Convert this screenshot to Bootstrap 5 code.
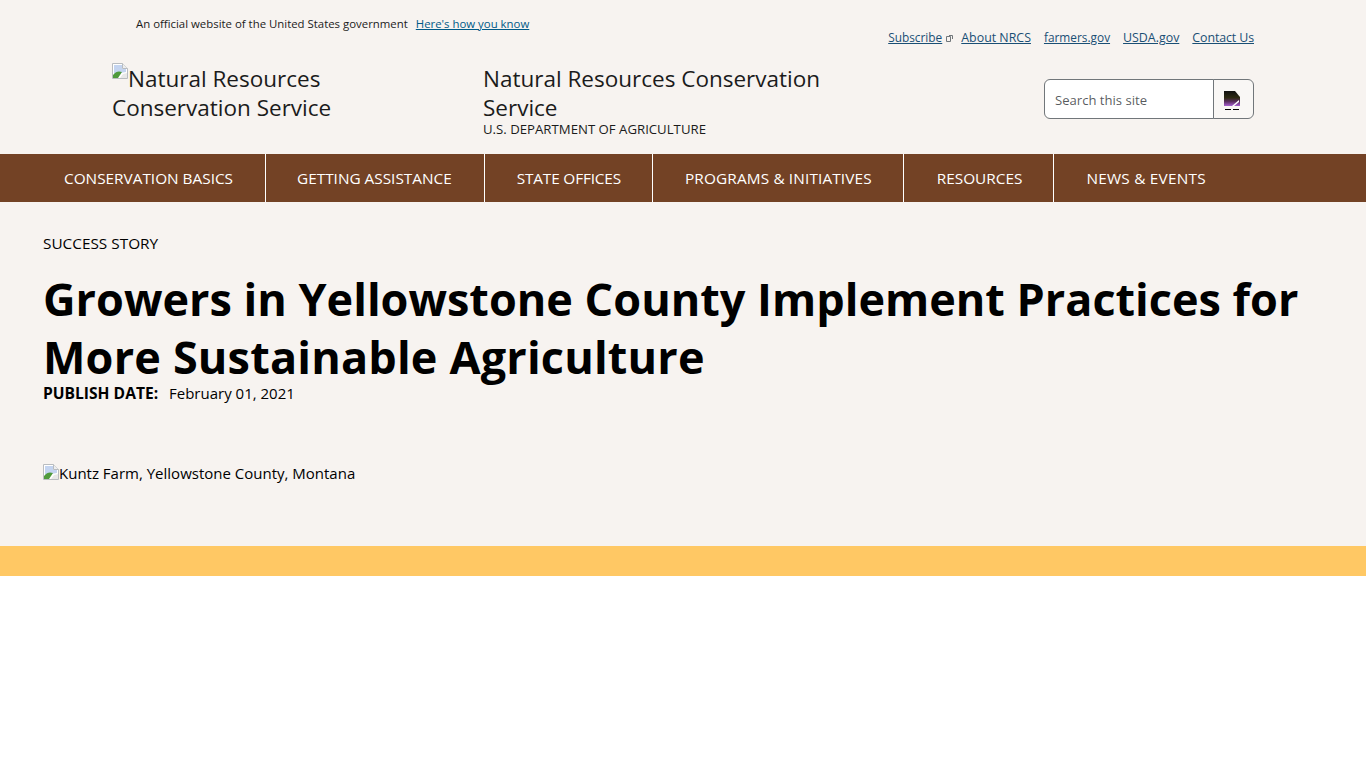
<!DOCTYPE html>
<html lang="en">
<head>
    <meta charset="UTF-8">
    <meta name="viewport" content="width=device-width, initial-scale=1.0">
    <title>Growers in Yellowstone County Implement Practices for More Sustainable Agriculture</title>

    <!-- Bootstrap CSS -->
    <link href="https://cdn.jsdelivr.net/npm/bootstrap@5.3.0/dist/css/bootstrap.min.css" rel="stylesheet">

    <!-- Custom CSS -->
    <style>
        body {
            background-color: #fff;
            font-family: "Open Sans", "Noto Sans", sans-serif;
            font-size: 15px;
            color: #000;
        }
        .page-tint {
            background-color: #f7f3f0;
        }
        .gov-banner {
            height: 48px;
            padding-left: 136px;
            padding-right: 112px;
        }
        .gov-text {
            font-size: 11.4px;
            padding-top: 15px;
            color: #1b1b1b;
        }
        .gov-link {
            color: #005a87;
            margin-left: 8px;
        }
        .top-links {
            padding-top: 29px;
            font-size: 12.4px;
            gap: 13px;
        }
        .top-links a {
            color: #1a4f75;
        }
        .top-links a:last-child {
            letter-spacing: -.1px;
        }
        .top-links .narrow-link {
            font-size: 11.85px;
        }
        .subscribe-item {
            margin-right: -5px;
        }
        .ext-mark {
            width: 7px;
            height: 7px;
            margin-left: 4px;
        }
        .brand-row {
            height: 106px;
            padding-left: 112px;
            padding-right: 112px;
        }
        .logo-alt {
            width: 371px;
            padding-top: 15px;
            font-size: 22.5px;
            line-height: 29px;
            color: #1b1b1b;
        }
        .site-name {
            width: 370px;
            padding-top: 16px;
            font-size: 22.5px;
            line-height: 29px;
            color: #1b1b1b;
        }
        .dept-name {
            font-size: 13.2px;
            line-height: 14px;
        }
        .search-wrap {
            width: 210px;
            height: 40px;
            margin-top: 31px;
        }
        .search-wrap .form-control {
            background-color: #fff;
            border-color: #71767a;
            font-size: 13.1px;
            height: 40px;
            padding-left: 10px;
            padding-top: 8px;
        }
        .search-wrap .btn {
            width: 41px;
            padding: 0 3px 0 0;
            background-color: #f9f7f5;
            border-color: #71767a;
        }
        .main-nav {
            background-color: #734225;
            height: 48px;
            padding-left: 32px;
        }
        .main-nav a {
            color: #fff;
            font-size: 15.35px;
            line-height: 48px;
            padding: 0 31px 0 32px;
            text-decoration: none;
            border-right: 1px solid #fff;
        }
        .main-nav a:last-child {
            border-right: 0;
        }
        .main-nav a:nth-child(1) {
            padding-right: 32px;
        }
        .main-nav a:nth-child(2) {
            padding: 0 32px 0 31px;
        }
        .main-nav a:nth-child(3) {
            letter-spacing: -.15px;
        }
        .main-nav a:nth-child(4) {
            letter-spacing: .14px;
        }
        .main-nav a:nth-child(5) {
            padding-left: 33px;
        }
        .main-nav a:nth-child(6) {
            letter-spacing: .23px;
        }
        .story {
            height: 344px;
            padding: 31px 43px 0;
        }
        .story-kicker {
            font-size: 15.35px;
            line-height: 21px;
        }
        .story-title {
            font-size: 45px;
            font-weight: 700;
            line-height: 57.6px;
            margin: 16px 0 0;
        }
        .title-tail {
            letter-spacing: .18px;
        }
        .publish-row {
            line-height: 21px;
            margin-top: -2px;
        }
        .publish-row strong {
            font-size: 15.6px;
            margin-right: 7px;
        }
        .photo-alt {
            margin-top: 59px;
            line-height: 21px;
        }
        .broken-pic {
            vertical-align: -1px;
        }
        .logo-alt .broken-pic {
            vertical-align: 8px;
        }
        .footer-strip {
            background-color: #ffc864;
            height: 30px;
        }
    </style>
</head>
<body>

<svg width="0" height="0" class="d-block">
    <symbol id="brokenImage" viewBox="0 0 16 16">
        <path d="M.5.5h10l5 5v10H.5z" fill="#fff" stroke="#b9bcc0"/>
        <path d="M10.5.5v5h5" fill="#eee" stroke="#b9bcc0"/>
        <path d="M2 2h8v4h4v3L2 11z" fill="#c4d4f0"/>
        <path d="M1 15v-3c3-4 6-4 9-3l-4 6z" fill="#4f9a3c"/>
        <path d="M8 15l3-4 4-1v5z" fill="#e8e8e8"/>
    </symbol>
</svg>

<div class="page-tint">
    <!-- Gov banner + utility links -->
    <div class="gov-banner d-flex justify-content-between">
        <div class="d-flex align-items-start">
            <span class="gov-text">An official website of the United States government</span>
            <a class="gov-link gov-text" href="#">Here's how you know</a>
        </div>
        <div class="top-links d-flex align-items-start">
            <span class="subscribe-item">
                <a class="narrow-link" href="#">Subscribe</a><svg class="ext-mark" viewBox="0 0 7 7"><path d="M.5 1.500h4v5h-4z M3 .5h3.500V4" fill="none" stroke="#71767a" stroke-width="1"/></svg>
            </span>
            <a href="#">About NRCS</a>
            <a class="narrow-link" href="#">farmers.gov</a>
            <a href="#">USDA.gov</a>
            <a href="#">Contact Us</a>
        </div>
    </div>

    <!-- Logo, site name, search -->
    <div class="brand-row d-flex">
        <div class="logo-alt">
            <svg class="broken-pic" width="16" height="16"><use href="#brokenImage"/></svg>Natural Resources<br>Conservation Service
        </div>
        <div class="site-name">
            Natural Resources Conservation Service
            <div class="dept-name">U.S. DEPARTMENT OF AGRICULTURE</div>
        </div>
        <form class="search-wrap input-group ms-auto">
            <input type="text" class="form-control" placeholder="Search this site">
            <button class="btn btn-light" type="button" aria-label="Search">
                <svg width="16" height="20" viewBox="0 0 16 20">
                    <defs>
                        <linearGradient id="searchFill" x1="0" y1="0" x2="0" y2="1">
                            <stop offset="0" stop-color="#111"/>
                            <stop offset=".45" stop-color="#2d2a12"/>
                            <stop offset=".7" stop-color="#5a2f60"/>
                            <stop offset="1" stop-color="#a860d0"/>
                        </linearGradient>
                    </defs>
                    <path d="M0 0h11l5 6v9H0z" fill="url(#searchFill)"/>
                    <path d="M8 15l7-6v2l-5 4z" fill="#fff"/>
                    <path d="M1 18.500h6M9 18.500h6" stroke="#000"/>
                </svg>
            </button>
        </form>
    </div>

    <!-- Main nav -->
    <nav class="main-nav d-flex">
        <a href="#">CONSERVATION BASICS</a>
        <a href="#">GETTING ASSISTANCE</a>
        <a href="#">STATE OFFICES</a>
        <a href="#">PROGRAMS &amp; INITIATIVES</a>
        <a href="#">RESOURCES</a>
        <a href="#">NEWS &amp; EVENTS</a>
    </nav>

    <!-- Story -->
    <main class="story">
        <div class="story-kicker">SUCCESS STORY</div>
        <h1 class="story-title">Growers in Yellowstone County Implement Practices for <span class="title-tail">More Sustainable Agriculture</span></h1>
        <div class="publish-row"><strong>PUBLISH DATE:</strong> <span>February 01, 2021</span></div>
        <div class="photo-alt"><svg class="broken-pic" width="16" height="16"><use href="#brokenImage"/></svg>Kuntz Farm, Yellowstone County, Montana</div>
    </main>
</div>

<div class="footer-strip"></div>

<!-- Bootstrap JS -->
<script src="https://cdn.jsdelivr.net/npm/bootstrap@5.3.0/dist/js/bootstrap.bundle.min.js"></script>

</body>
</html>
